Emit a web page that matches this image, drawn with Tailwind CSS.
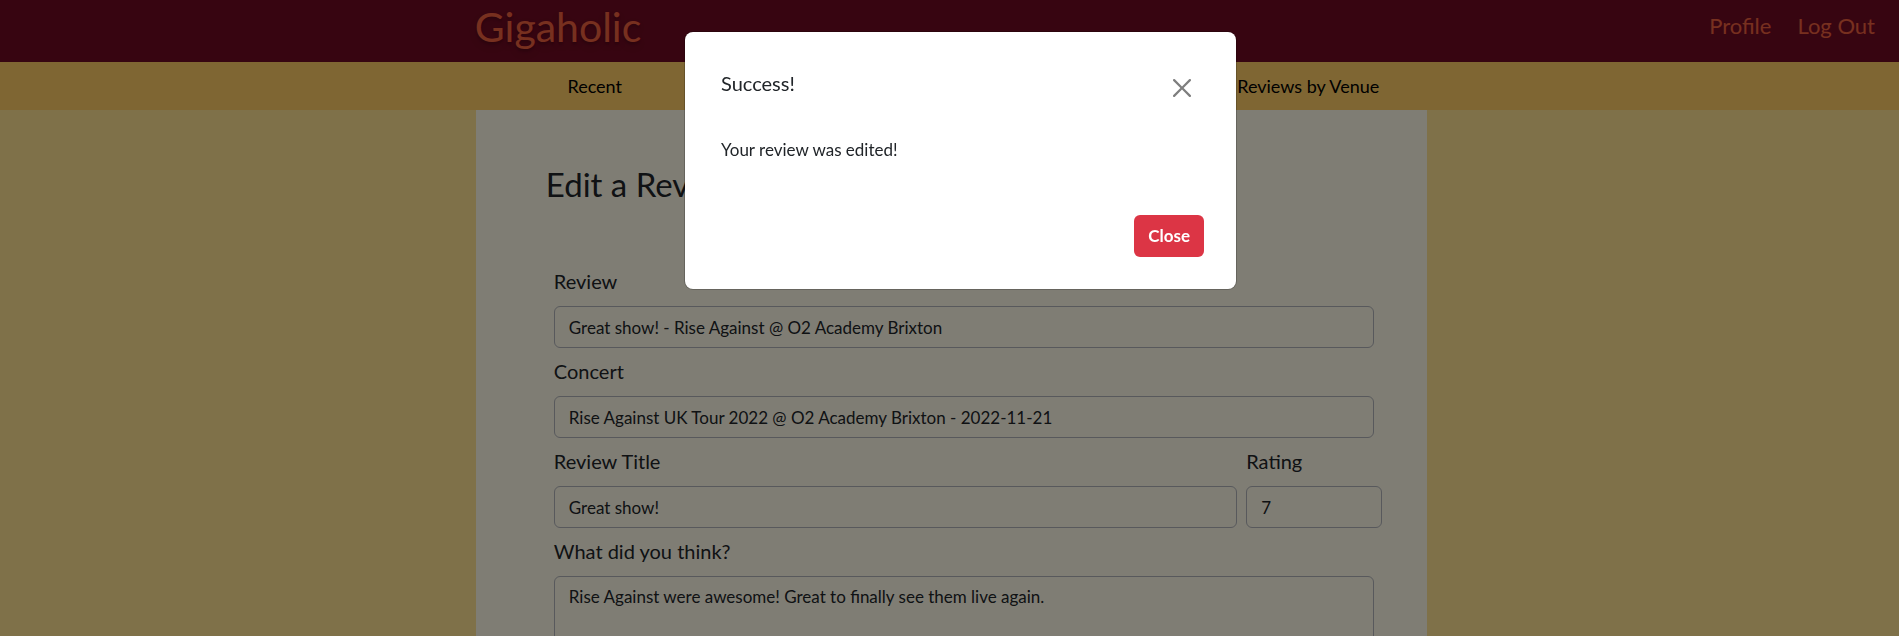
<!DOCTYPE html>
<html lang="en">
<head>
<meta charset="utf-8">
<meta name="viewport" content="width=device-width, initial-scale=1">
<title>Gigaholic</title>
<script src="https://cdn.jsdelivr.net/npm/@tailwindcss/browser@4"></script>
</head>
<body class="h-screen overflow-hidden bg-[#ffe293] font-['Lato',sans-serif] text-[#212529]">
  <header class="flex h-[62px] justify-between bg-[#6e0b22] pl-[25%] pr-6 text-[#ef603f]">
    <a href="#" class="text-[41px] leading-[54px] text-shadow-lg">Gigaholic</a>
    <div class="flex gap-[26px] pt-2.5 text-[22px] leading-8">
      <a href="#">Profile</a>
      <a href="#">Log Out</a>
    </div>
  </header>
  <nav class="flex h-12 justify-center bg-[#ffcc66] text-lg text-black">
    <div class="ml-1 grid w-[50.1%] grid-cols-4 items-center text-center">
      <a href="#">Recent</a>
      <a href="#" class="col-start-4">Reviews by Venue</a>
    </div>
  </nav>
  <div class="flex justify-center">
    <main class="ml-1 min-h-screen w-[50.1%] bg-[#fffae8] pt-[50px] pr-[45px] pl-[70px]">
      <h1 class="text-[33px] leading-12">Edit a Review</h1>
      <form class="mt-[58px] ml-2 text-lg">
        <div class="mr-2">
          <label for="review" class="mb-2.5 block text-xl leading-[30px]">Review</label>
          <input id="review" type="text" value="Great show! - Rise Against @ O2 Academy Brixton" class="block h-[42px] w-full rounded-md border border-[#b0b3b9] px-3.5 text-[17px]">
          <label for="concert" class="mt-2 mb-2.5 block text-xl leading-[30px]">Concert</label>
          <input id="concert" type="text" value="Rise Against UK Tour 2022 @ O2 Academy Brixton - 2022-11-21" class="block h-[42px] w-full rounded-md border border-[#b0b3b9] px-3.5 text-[17px]">
        </div>
        <div class="mt-2 flex gap-[9px]">
          <div class="flex-1">
            <label for="title" class="mb-2.5 block text-xl leading-[30px]">Review Title</label>
            <input id="title" type="text" value="Great show!" class="block h-[42px] w-full rounded-md border border-[#b0b3b9] px-3.5 text-[17px]">
          </div>
          <div class="w-[136px]">
            <label for="rating" class="mb-2.5 block text-xl leading-[30px]">Rating</label>
            <input id="rating" type="text" value="7" class="block h-[42px] w-full rounded-md border border-[#b0b3b9] px-3.5 text-[17px]">
          </div>
        </div>
        <div class="mt-2 mr-2">
          <label for="text" class="mb-2.5 block text-xl leading-[30px]">What did you think?</label>
          <textarea id="text" rows="5" class="block w-full resize-none rounded-md border border-[#b0b3b9] px-3.5 py-1.5 text-[17px] leading-7">Rise Against were awesome! Great to finally see them live again.</textarea>
        </div>
      </form>
    </main>
  </div>

  <div class="fixed inset-0 flex items-start justify-center bg-black/50 pt-8 pl-[22px]">
    <div role="dialog" aria-modal="true" aria-labelledby="dialog-title" class="w-full max-w-[551px] rounded-lg bg-white px-9 pt-9 pb-8 ring-1 ring-black/20">
      <div class="flex items-start justify-between">
        <h2 id="dialog-title" class="text-xl leading-[30px]">Success!</h2>
        <button type="button" aria-label="Close dialog" class="mt-2.5 mr-2 p-px opacity-50">
          <svg class="size-[18px]" viewBox="0 0 16 16" fill="#000"><path d="M.293.293a1 1 0 0 1 1.414 0L8 6.586 14.293.293a1 1 0 1 1 1.414 1.414L9.414 8l6.293 6.293a1 1 0 0 1-1.414 1.414L8 9.414l-6.293 6.293a1 1 0 0 1-1.414-1.414L6.586 8 .293 1.707a1 1 0 0 1 0-1.414z"/></svg>
        </button>
      </div>
      <p class="mt-[38px] text-[17px] leading-7">Your review was edited!</p>
      <div class="mt-[51px] -mr-1 flex justify-end">
        <button type="button" class="h-[42px] rounded-md bg-[#dc3545] px-3.5 text-[17px] font-bold text-white">Close</button>
      </div>
    </div>
  </div>
</body>
</html>
